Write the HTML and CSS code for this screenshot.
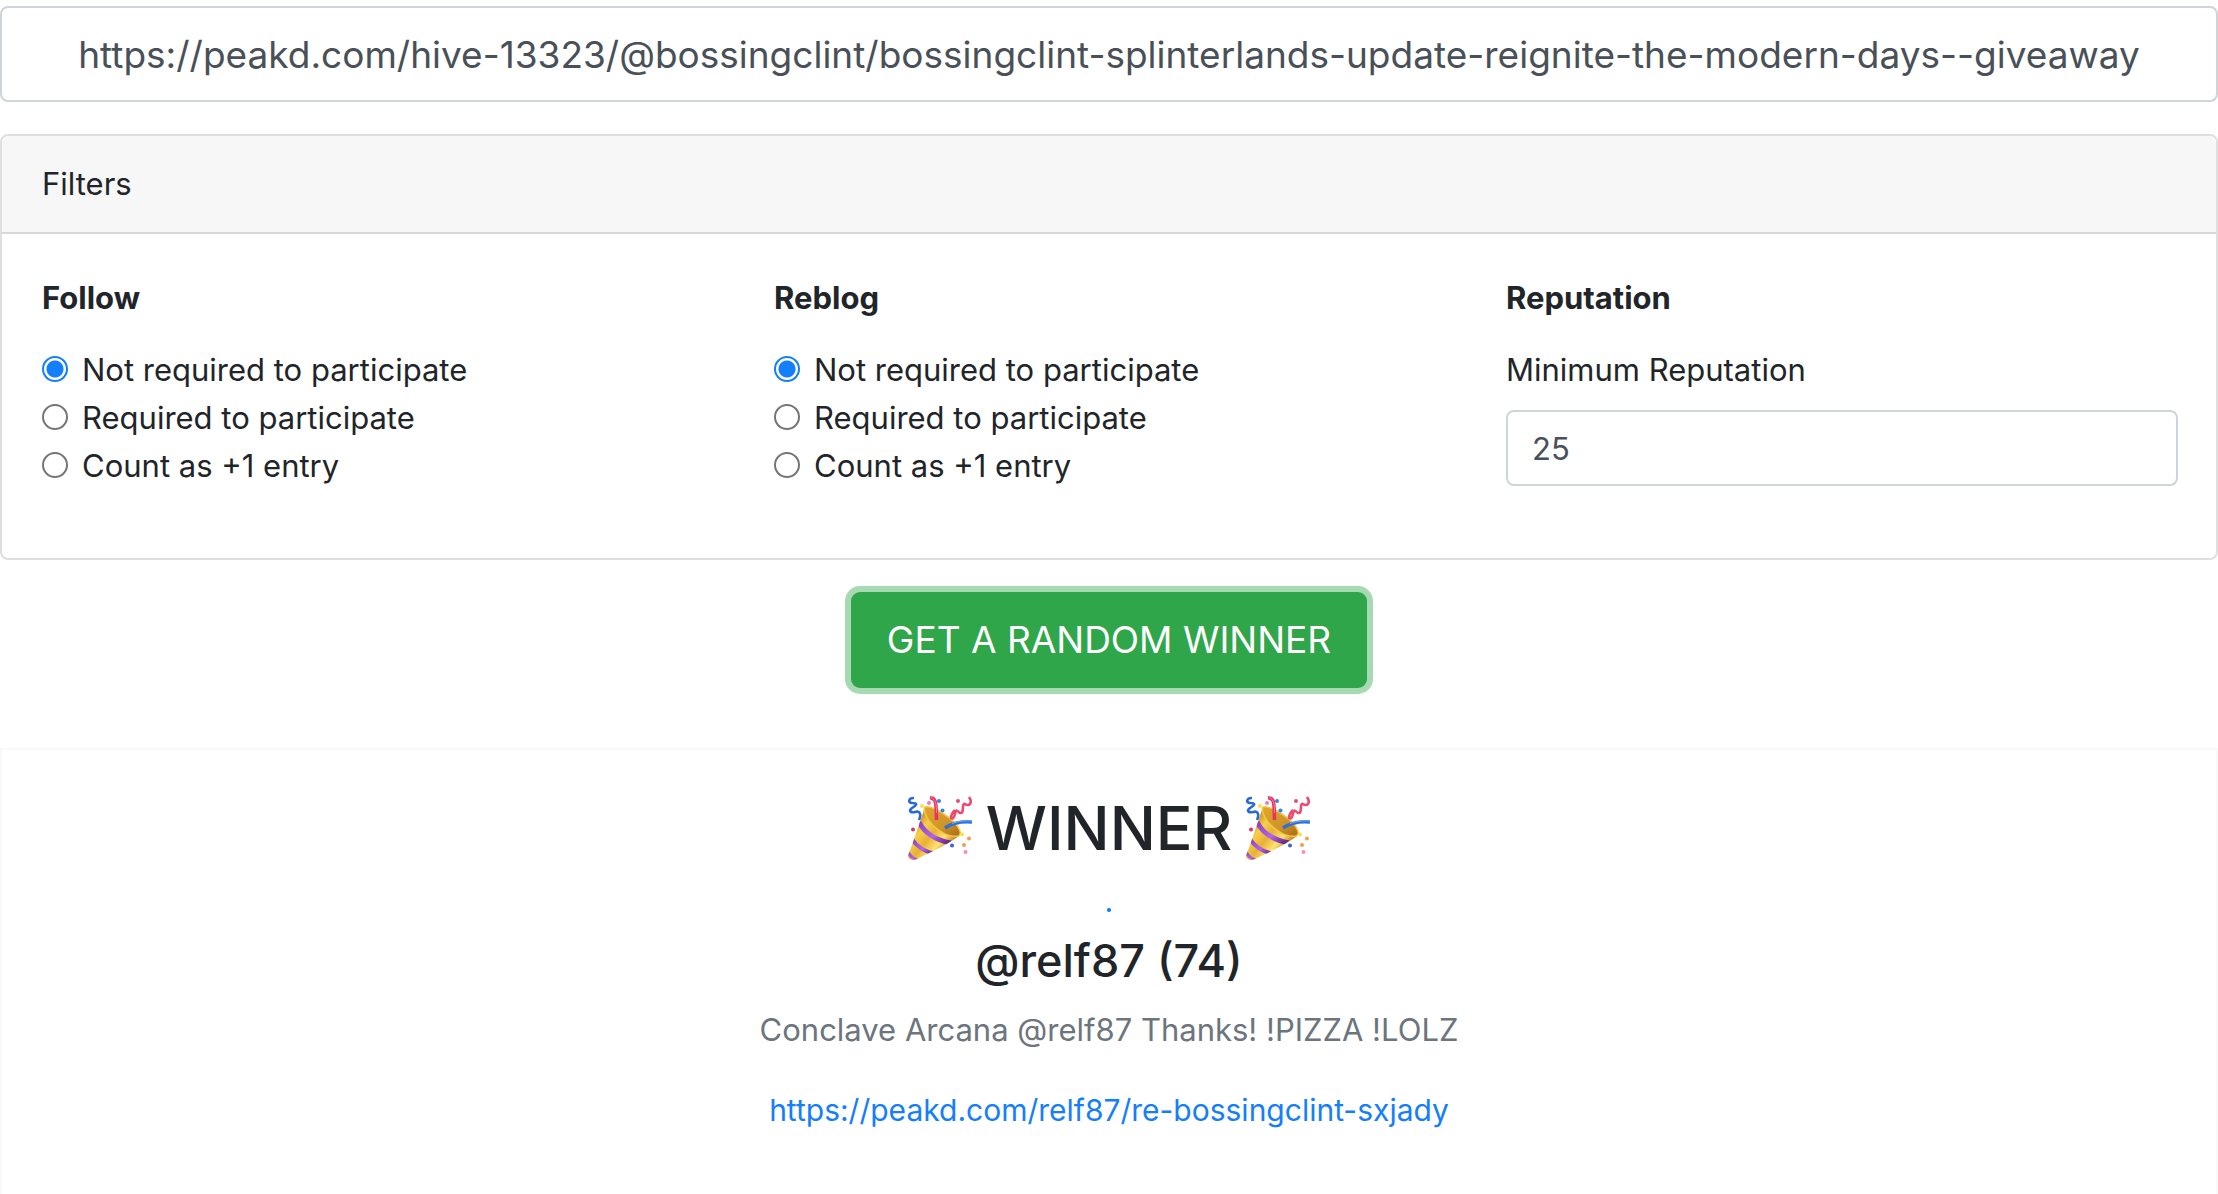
FILE: index.html
```html
<!DOCTYPE html>
<html lang="en">
<head>
  <meta charset="UTF-8" />
  <title>Random Winner Picker</title>
  <link rel="stylesheet" href="styles.css">
</head>
<body>
  <!-- Party popper icon, used on both sides of the title -->
  <svg class="sprite" aria-hidden="true">
    <defs>
      <linearGradient id="gold" x1="0.1" y1="0.3" x2="0.75" y2="0.85">
        <stop offset="0" stop-color="#c98a1c" />
        <stop offset="0.25" stop-color="#f7cf4a" />
        <stop offset="0.5" stop-color="#e8b135" />
        <stop offset="0.75" stop-color="#ffe372" />
        <stop offset="1" stop-color="#b9791a" />
      </linearGradient>
      <linearGradient id="purple" x1="0" y1="0" x2="1" y2="0.8">
        <stop offset="0" stop-color="#8a3fc4" />
        <stop offset="0.6" stop-color="#b266e6" />
        <stop offset="1" stop-color="#6d2a91" />
      </linearGradient>
      <linearGradient id="inside" x1="0" y1="0" x2="1" y2="1">
        <stop offset="0" stop-color="#e0a72d" />
        <stop offset="0.6" stop-color="#cf9428" />
        <stop offset="1" stop-color="#a86b12" />
      </linearGradient>
      <clipPath id="cone">
        <path d="M17 11C14 20 4 50 0 60C0 63 4 65 9 63C20 58 42 47 51 40Z" />
      </clipPath>
    </defs>
    <symbol id="popper" viewBox="0 0 64 64">
      <path d="M17 11C14 20 4 50 0 60C0 63 4 65 9 63C20 58 42 47 51 40Z" fill="url(#gold)" />
      <g clip-path="url(#cone)" fill="none" stroke="url(#purple)">
        <path d="M11 26C16 36 27 44 43 47" stroke-width="5" />
        <path d="M4 43C8 50 15 55 27 58" stroke-width="4" />
        <path d="M0 56C2 60 5 63 11 65" stroke-width="3" />
      </g>
      <path d="M17 11C24 9 43 21 50 31C53 36 53 39 50 40C42 42 29 35 22 26C18 21 15 14 17 11Z" fill="url(#inside)" stroke="#f2c748" stroke-width="1.5" />
      <path d="M22 2C29 1 28 10 28.500 24" fill="none" stroke="#e8325f" stroke-width="3.500" />
      <path d="M23 1.500C28 3 28.500 9 28.500 17" fill="none" stroke="#ff7c98" stroke-width="1" />
      <path d="M37 32C46 26 54 25 64 26" fill="none" stroke="#2f6fd8" stroke-width="3.500" />
      <path d="M44 27.500C51 25 57 24.500 64 25" fill="none" stroke="#72aaff" stroke-width="1" />
      <path d="M6 2C0 2 0 7 4 7C10 7 9 9 4 12C0 15 3 17 7 16C13 14 13 20 11 24" fill="none" stroke="#2868d8" stroke-width="2.600" />
      <path d="M61 1C65 7 61 11 57 8C53 7 57 18 52 17C47 13 48 14 47 18C46 22 45 23 43 22C43 18 45 16 47 14" fill="none" stroke="#e94d72" stroke-width="2.600" />
      <circle cx="14" cy="10" r="2" fill="#f9e448" />
      <circle cx="21" cy="7" r="2" fill="#f07caf" />
      <circle cx="31" cy="5" r="2" fill="#3582ec" />
      <circle cx="34.500" cy="14.500" r="2" fill="#3582ec" />
      <circle cx="50" cy="5" r="2" fill="#e94d72" />
      <circle cx="5" cy="33.500" r="2" fill="#d93462" />
      <circle cx="54" cy="38.500" r="2" fill="#f9e448" />
      <circle cx="61" cy="42.500" r="2" fill="#f2a04a" />
      <circle cx="56" cy="49" r="2" fill="#f2a04a" />
      <circle cx="44" cy="49.500" r="2" fill="#3566d4" />
      <circle cx="57.500" cy="56" r="2" fill="#f58dba" />
    </symbol>
  </svg>

  <input type="text" class="form-control post-url" aria-label="Post URL" value="https://peakd.com/hive-13323/@bossingclint/bossingclint-splinterlands-update-reignite-the-modern-days--giveaway" />

  <div class="card">
    <div class="card-header">Filters</div>
    <div class="card-body">
      <fieldset class="filter">
        <legend class="filter-title">Follow</legend>
        <label class="form-check"><input type="radio" name="follow" checked /> Not required to participate</label>
        <label class="form-check"><input type="radio" name="follow" /> Required to participate</label>
        <label class="form-check"><input type="radio" name="follow" /> Count as +1 entry</label>
      </fieldset>

      <fieldset class="filter">
        <legend class="filter-title">Reblog</legend>
        <label class="form-check"><input type="radio" name="reblog" checked /> Not required to participate</label>
        <label class="form-check"><input type="radio" name="reblog" /> Required to participate</label>
        <label class="form-check"><input type="radio" name="reblog" /> Count as +1 entry</label>
      </fieldset>

      <fieldset class="filter">
        <legend class="filter-title">Reputation</legend>
        <label class="rep-label" for="reputation">Minimum Reputation</label>
        <input type="text" inputmode="numeric" class="form-control" id="reputation" value="25" />
      </fieldset>
    </div>
  </div>

  <div class="actions">
    <button type="button" class="btn-winner">GET A RANDOM WINNER</button>
  </div>

  <div class="winner">
    <h1 class="winner-title">
      <svg class="popper"><use href="#popper" /></svg>
      WINNER
      <svg class="popper"><use href="#popper" /></svg>
    </h1>
    <div class="avatar"></div>
    <h2 class="winner-name">@relf87 (74)</h2>
    <p class="winner-comment">Conclave Arcana @relf87 Thanks! !PIZZA !LOLZ</p>
    <a class="winner-link" href="https://peakd.com/relf87/re-bossingclint-sxjady">https://peakd.com/relf87/re-bossingclint-sxjady</a>
  </div>
</body>
</html>
```

FILE: styles.css
```css
* {
  box-sizing: border-box;
}

body {
  margin: 0;
  padding-top: 6px;
  min-height: 100vh;
  display: flex;
  flex-direction: column;
  font-family: Inter, "Liberation Sans", sans-serif;
  font-size: 31px;
  line-height: 48px;
  color: #212529;
  background: #fff;
}

.sprite {
  position: absolute;
  width: 0;
  height: 0;
}

.form-control {
  width: 100%;
  height: 76px;
  padding: 0 24px;
  font: inherit;
  color: #495057;
  background: #fff;
  border: 2px solid #ced4da;
  border-radius: 8px;
}

.post-url {
  height: 96px;
  font-size: 37px;
  text-align: center;
}

/* Filters card */
.card {
  margin-top: 32px;
  border: 2px solid #dfdfdf;
  border-radius: 8px;
}

.card-header {
  padding: 24px 40px;
  background: #f7f7f7;
  border-bottom: 2px solid #d8d8d8;
  border-radius: 6px 6px 0 0;
}

.card-body {
  display: grid;
  grid-template-columns: repeat(3, 1fr);
  gap: 60px;
  padding: 40px 38px 68px 40px;
}

.filter {
  min-width: 0;
  margin: 0;
  padding: 0;
  border: none;
}

.filter-title {
  padding: 0;
  margin-bottom: 24px;
  font-weight: bold;
}

.form-check {
  display: flex;
  align-items: center;
  gap: 14px;
}

.form-check input {
  appearance: none;
  width: 26px;
  height: 26px;
  margin: 0 0 2px;
  border: 2px solid #767676;
  border-radius: 50%;
}

.form-check input:checked {
  border-color: #157efb;
  background: radial-gradient(circle, #157efb 8px, #fff 9px);
}

.rep-label {
  display: block;
  margin-bottom: 16px;
}

.actions {
  padding: 32px 0 60px;
  text-align: center;
}

.btn-winner {
  height: 96px;
  padding: 0 36px;
  font: inherit;
  font-size: 37px;
  color: #fff;
  background: #30a64a;
  border: none;
  border-radius: 9px;
  box-shadow: 0 0 0 6px #a7dab3;
  display: block;
  margin: 0 auto;
  cursor: pointer;
}

/* Winner box */
.winner {
  flex: 1;
  padding: 40px;
  text-align: center;
  border: 2px solid #f8f9fa;
  border-bottom: none;
}

.winner-title {
  display: flex;
  justify-content: center;
  align-items: center;
  gap: 14px;
  margin: 0;
  font-size: 61px;
  font-weight: 500;
  line-height: 76px;
}

.popper {
  width: 64px;
  height: 64px;
}

.avatar {
  width: 4px;
  height: 4px;
  margin: 42px auto 20px;
  border-radius: 50%;
  background: #007bff;
}

.winner-name {
  margin: 0 0 16px;
  font-size: 45px;
  font-weight: 500;
  line-height: 58px;
}

.winner-comment {
  margin: 0 0 32px;
  color: #6c757d;
}

.winner-link {
  font-size: 30px;
  color: #157efb;
  text-decoration: none;
}
```
